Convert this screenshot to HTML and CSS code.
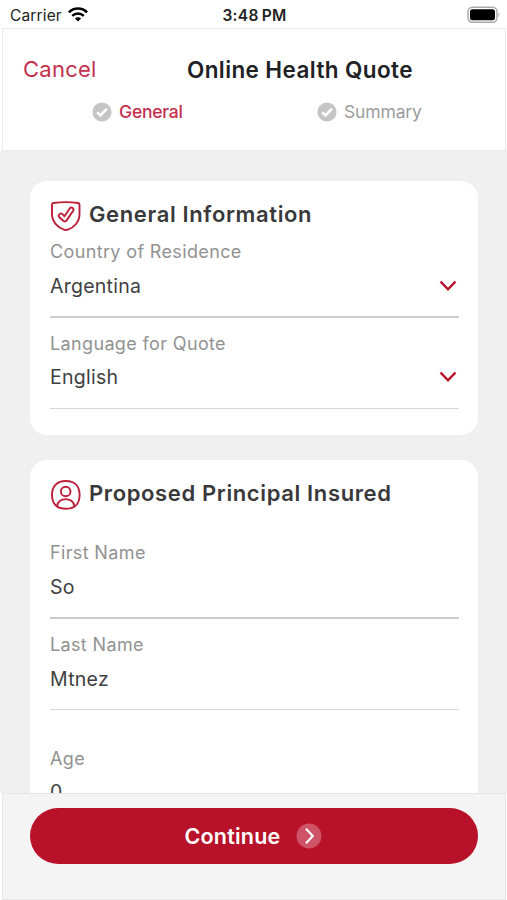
FILE: index.html
```html
<!DOCTYPE html>
<html lang="en">
<head>
<meta charset="utf-8">
<title>Online Health Quote</title>
<link rel="stylesheet" href="styles.css">
</head>
<body>
<div class="status">
  <div class="carrier"><span>Carrier</span>
    <svg class="wifi" width="20" height="15" viewBox="0 0 20 15" fill="none" stroke="#000" stroke-width="2.5"><path d="M.9 5.4C6 .3 14 .3 19.1 5.4M4.2 8.8C7.600 5.600 12.400 5.600 15.800 8.800"/><path d="M10 14.500 6.900 11.400C8.500 9.800 11.500 9.800 13.100 11.400Z" fill="#000" stroke="none"/></svg>
  </div>
  <span class="clock">3:48<i></i>PM</span>
  <svg class="battery" width="34" height="18" viewBox="0 0 34 18"><rect x="1" y="1.200" width="29" height="15" rx="4.500" fill="#fff" stroke="#aaa" stroke-width="1.500"/><rect x="3" y="3.200" width="25" height="11" rx="2.500"/><path d="M31.500 6.500Q33.500 8.700 31.500 11Z" fill="#aaa"/></svg>
</div>
<header class="header">
  <div class="titlebar"><span class="cancel">Cancel</span><h1>Online Health Quote</h1></div>
  <nav class="steps">
    <div class="step active"><svg width="20" height="20" viewBox="0 0 20 20"><circle cx="10" cy="10" r="9.600" fill="#c5c5c5"/><path d="M5.200 10.400 8.400 13.400 15 6.700" fill="none" stroke="#fff" stroke-width="2.600"/></svg><span>General</span></div>
    <div class="step"><svg width="20" height="20" viewBox="0 0 20 20"><circle cx="10" cy="10" r="9.600" fill="#c5c5c5"/><path d="M5.200 10.400 8.400 13.400 15 6.700" fill="none" stroke="#fff" stroke-width="2.600"/></svg><span>Summary</span></div>
  </nav>
</header>
<main class="content">
  <section class="card first">
    <div class="heading"><svg width="30" height="30" viewBox="0 0 30 30" fill="none" stroke="#bd1e3a" stroke-width="1.900" stroke-linejoin="round"><path d="M1 3.500Q1 2.200 2.500 2Q15 .2 27 2Q28.500 2.200 28.500 3.500V13C28.500 21 23 26.500 17 28.600Q15 29.300 13 28.600C7 26.500 1 21 1 13Z"/><path d="M8.200 13.500Q9.800 11.500 11.500 13.200L13.500 15.300 18.500 7.700Q20 5.700 21.700 7Q23.200 8.200 22 10L15.600 19.400Q13.900 21.500 12.100 19.700L8.200 16Q7 14.800 8.200 13.500Z"/></svg><h2>General Information</h2></div>
    <div class="field"><label>Country of Residence</label><div class="value"><span>Argentina</span><svg class="chevron" width="18" height="12" viewBox="0 0 18 12"><path d="M1.500 1.500 9 9.300 16.500 1.500" fill="none" stroke="#b5122b" stroke-width="2.500"/></svg></div></div>
    <div class="field thin"><label>Language for Quote</label><div class="value"><span>English</span><svg class="chevron" width="18" height="12" viewBox="0 0 18 12"><path d="M1.500 1.500 9 9.300 16.500 1.500" fill="none" stroke="#b5122b" stroke-width="2.500"/></svg></div></div>
  </section>
  <section class="card second">
    <div class="heading"><svg width="30" height="30" viewBox="0 0 30 30" fill="none" stroke="#bd1e3a" stroke-width="1.900"><path d="M14.800 1C23.500 1 28.600 6.100 28.600 15S23.500 28.800 14.800 28.800 1 23.900 1 15 6.100 1 14.800 1Z"/><circle cx="14.700" cy="11.500" r="4.800"/><path d="M6.200 26C6.800 16.800 22.600 16.800 23.200 26"/></svg><h2>Proposed Principal Insured</h2></div>
    <div class="field"><label>First Name</label><div class="value"><span>So</span></div></div>
    <div class="field thin"><label>Last Name</label><div class="value"><span>Mtnez</span></div></div>
    <div class="field age"><label>Age</label><div class="value"><span>0</span></div></div>
  </section>
</main>
<footer class="footer">
  <button class="continue"><span>Continue</span><svg width="26" height="26" viewBox="0 0 26 26"><circle cx="13" cy="13" r="12.500" fill="#cf5367"/><path d="M10 5.800 16.800 13 10 20.200" fill="none" stroke="#fff" stroke-width="2.200"/></svg></button>
</footer>
</body>
</html>
```
FILE: styles.css
```css
* { box-sizing: border-box; }
body {
  margin: 0;
  width: 507px;
  height: 900px;
  overflow: hidden;
  display: flex;
  flex-direction: column;
  background: #fff;
  font-family: Inter, "Liberation Sans", sans-serif;
  color: #404042;
}
h1, h2 { margin: 0; font-weight: 600; white-space: nowrap; }
svg { display: block; flex: none; }

.status {
  height: 28px;
  flex: none;
  display: grid;
  grid-template-columns: 1fr auto 1fr;
  align-items: center;
  padding: 1px 8px 0 10px;
  color: #222;
  font-size: 15.5px;
}
.carrier { display: flex; align-items: center; gap: 6px; letter-spacing: .15px; }
.carrier span, .clock { padding-top: 1px; }
.clock { font-weight: 600; letter-spacing: .3px; }
.clock i { display: inline-block; width: 3px; }
.battery { justify-self: end; margin-right: -2px; }

.header {
  height: 123px;
  flex: none;
  margin: 0 1px 0 2px;
  border: 1px solid #e9e9e9;
  padding-top: 21px;
}
.titlebar { display: flex; align-items: center; height: 38px; padding-left: 20px; }
.cancel { width: 164px; flex: none; font-size: 22px; letter-spacing: .25px; color: #c43050; }
h1 { font-size: 22.5px; letter-spacing: .4px; color: #202124; }
.steps { display: flex; height: 47px; align-items: center; padding-left: 89px; }
.step { flex: none; display: flex; align-items: center; gap: 7px; font-size: 17.5px; letter-spacing: -.15px; color: #9c9c9c; }
.step.active { width: 225px; color: #c43050; font-weight: 500; letter-spacing: -.2px; }

.content {
  flex: 1;
  min-height: 0;
  overflow: hidden;
  background: #f0f0f0;
  padding: 30px 29px 0 30px;
}
.card { background: #fff; border-radius: 17px; padding: 16px 19px 0 20px; }
.first { height: 254px; margin-bottom: 25px; }
.second { height: 400px; }
.heading { display: flex; height: 43px; gap: 8px; padding: 4px 0 0 1px; }
.heading h2 { font-size: 22px; line-height: 26px; letter-spacing: .63px; color: #39393b; }
.second .heading { height: 65px; }
.field { height: 78px; border-bottom: 2px solid #ccc; margin-bottom: 14px; }
.field.thin { height: 77px; border-bottom: 1px solid #d8d8d8; }
.field label { display: block; font-size: 18px; line-height: 24px; letter-spacing: .36px; color: #929292; }
.value { display: flex; justify-content: space-between; align-items: center; height: 30px; margin-top: 7px; padding-right: 2.5px; font-size: 19.5px; letter-spacing: .25px; }
.field.thin .value { margin-top: 6px; }
.second .field.thin .value { margin-top: 7px; }
.age { margin-top: 37px; }
.age .value { margin-top: 6px; }

.footer {
  height: 107px;
  flex: none;
  margin: 0 1px 0 2px;
  border: 1px solid #e5e5e7;
  background: #f4f4f4;
  padding: 14px 27px 0;
}
.continue {
  width: 448px;
  height: 56px;
  border: 0;
  border-radius: 28px;
  padding: 0 7px 0 6px;
  background: #b71229;
  color: #fff;
  display: flex;
  align-items: center;
  justify-content: center;
  gap: 16px;
  font: 600 21.5px Inter, "Liberation Sans", sans-serif;
  letter-spacing: .2px;
}
```
